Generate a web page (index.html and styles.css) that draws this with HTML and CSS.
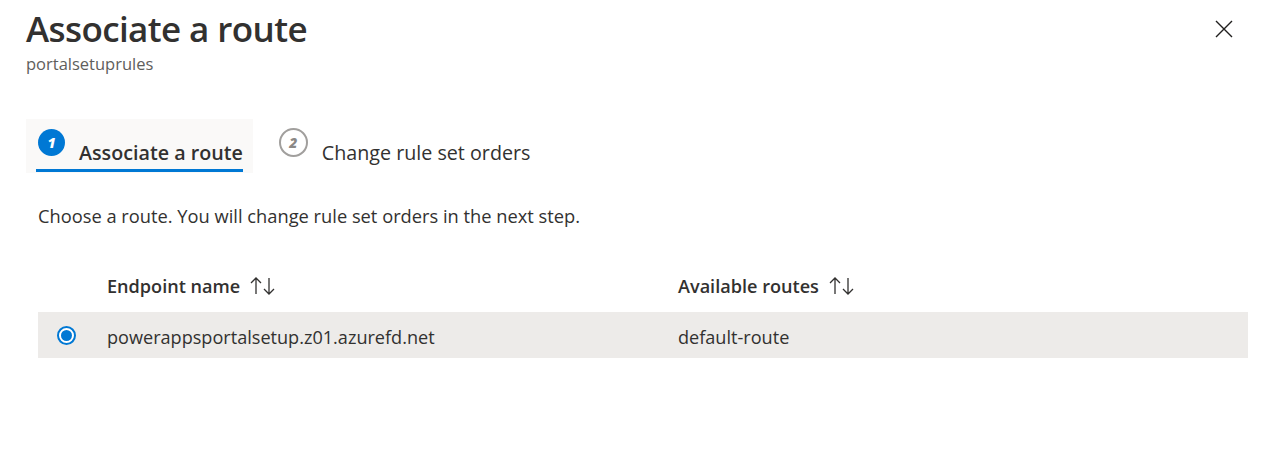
FILE: index.html
```html
<!DOCTYPE html>
<html lang="en">
<head>
<meta charset="utf-8">
<title>Associate a route</title>
<link rel="stylesheet" href="styles.css">
</head>
<body>
<div class="panel">
  <header class="head">
    <div class="titles">
      <h1 class="title">Associate a route</h1>
      <div class="subtitle">portalsetuprules</div>
    </div>
    <button class="close" aria-label="Close">
      <svg width="18" height="18" viewBox="0 0 18 18"><path d="M1 1 L17 17 M17 1 L1 17" stroke="#201f1e" stroke-width="1.4" fill="none"/></svg>
    </button>
  </header>

  <nav class="steps">
    <div class="step active">
      <span class="num filled">1</span>
      <span class="label">Associate a route</span>
    </div>
    <div class="step">
      <span class="num outline">2</span>
      <span class="label">Change rule set orders</span>
    </div>
  </nav>

  <p class="desc">Choose a route. You will change rule set orders in the next step.</p>

  <div class="table">
    <div class="row header">
      <div class="cell check"></div>
      <div class="cell c1">Endpoint name <span class="sort"><svg width="26" height="20" viewBox="0 0 26 20"><path d="M6 2 V18 M1 7 L6 2 L11 7" stroke="#323130" stroke-width="1.3" fill="none"/><path d="M19 2 V18 M14 13 L19 18 L24 13" stroke="#323130" stroke-width="1.3" fill="none"/></svg></span></div>
      <div class="cell c2">Available routes <span class="sort"><svg width="26" height="20" viewBox="0 0 26 20"><path d="M6 2 V18 M1 7 L6 2 L11 7" stroke="#323130" stroke-width="1.3" fill="none"/><path d="M19 2 V18 M14 13 L19 18 L24 13" stroke="#323130" stroke-width="1.3" fill="none"/></svg></span></div>
    </div>
    <div class="row item selected">
      <div class="cell check"><span class="radio"><span class="dot"></span></span></div>
      <div class="cell c1 txt">powerappsportalsetup.z01.azurefd.net</div>
      <div class="cell c2 txt">default-route</div>
    </div>
  </div>
</div>
</body>
</html>
```

FILE: styles.css
```css
* { box-sizing: border-box; }
html, body { margin: 0; padding: 0; background: #ffffff; }
body {
  font-family: "Open Sans", "Noto Sans", sans-serif;
  color: #323130;
  width: 1278px;
  height: 466px;
  overflow: hidden;
}
.panel {
  padding: 0 30px 0 26px;
}
.head {
  display: flex;
  justify-content: space-between;
  align-items: flex-start;
}
.title {
  margin: 0;
  font-size: 35px;
  font-weight: 600;
  line-height: 46px;
  padding-top: 6px;
  color: #323130;
  letter-spacing: -0.6px;
}
.subtitle {
  font-size: 16.5px;
  line-height: 22px;
  color: #605e5c;
  margin-top: 1px;
}
.close {
  border: 0;
  background: none;
  padding: 0;
  margin: 20px 15px 0 0;
  width: 18px;
  height: 18px;
  display: block;
}
.steps {
  display: flex;
  margin-top: 44px;
  gap: 26px;
}
.step {
  display: flex;
  align-items: center;
  gap: 14px;
  height: 54px;
  padding: 0 10px 2px 12px;
  position: relative;
}
.step.active {
  background: #faf9f8;
}
.step.active::after {
  content: "";
  position: absolute;
  left: 10px;
  right: 10px;
  bottom: 1px;
  height: 3px;
  background: #0078d4;
}
.num {
  width: 27px;
  height: 27px;
  border-radius: 50%;
  display: flex;
  align-items: center;
  justify-content: center;
  font-size: 14px;
  font-weight: 800;
  font-style: italic;
  margin-top: -6px;
}
.num.filled { background: #0078d4; color: #ffffff; }
.num.outline { border: 2px solid #a19f9d; color: #8a8886; width: 29px; height: 29px; }
.label {
  font-size: 19.7px;
  color: #323130;
  margin-top: 14px;
}
.step.active .label { font-weight: 600; }
.step:not(.active) { padding-left: 0; }
.desc {
  margin: 31px 0 0 12px;
  font-size: 18.3px;
  line-height: 24px;
  color: #323130;
}
.table {
  margin: 31px 0 0 12px;
  width: 1210px;
}
.row {
  display: flex;
  align-items: center;
}
.row.header { height: 53px; }
.row.item { height: 46px; }
.row.selected { background: #edebe9; }
.cell { font-size: 18.1px; }
.txt { padding-top: 3px; }
.check { width: 69px; display: flex; justify-content: flex-start; padding-left: 19px; }
.c1 { width: 571px; display: flex; align-items: center; }
.c2 { display: flex; align-items: center; }
.header .cell { font-weight: 600; }
.sort { display: inline-flex; margin-left: 10px; }
.radio {
  width: 19px;
  height: 19px;
  border: 2px solid #0078d4;
  border-radius: 50%;
  display: flex;
  align-items: center;
  justify-content: center;
  background: #ffffff;
}
.dot { width: 11px; height: 11px; border-radius: 50%; background: #0078d4; }
```
